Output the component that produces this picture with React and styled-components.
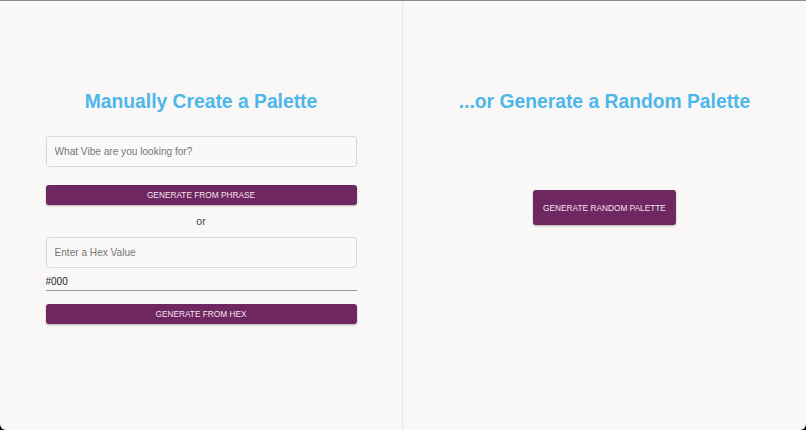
import React from 'react';
import styled, { createGlobalStyle } from 'styled-components';

const Global = createGlobalStyle`
  html, body {
    margin: 0;
    padding: 0;
    background: #000;
  }
  * { box-sizing: border-box; }
`;

const Page = styled.div`
  display: flex;
  height: 430px;
  width: 806px;
  background: #f9f8f7;
  border-top: 1px solid #8f8b8e;
  border-radius: 0 0 6px 6px;
  overflow: hidden;
  font-family: 'Liberation Sans', Arial, sans-serif;
`;

const Panel = styled.section`
  flex: ${p => (p.$left ? '0 0 403px' : '1')};
  display: flex;
  flex-direction: column;
  align-items: center;
  padding-top: 89px;
  border-right: ${p => (p.$left ? '1px solid #e9e7e6' : 'none')};
`;

const Title = styled.h2`
  margin: 0;
  font-size: 19.3px;
  line-height: 24px;
  font-weight: bold;
  color: #4db6ea;
`;

const Form = styled.div`
  width: 311px;
  display: flex;
  flex-direction: column;
  margin-top: 22px;
`;

const TextInput = styled.input`
  height: 31px;
  width: 100%;
  border: 1px solid #dad8d7;
  border-radius: 3px;
  background: #faf9f8;
  padding: 0 8px;
  font-family: inherit;
  font-size: 10.1px;
  color: #333;
  outline: none;
  &::placeholder { color: #777; }
`;

const Button = styled.button`
  width: ${p => p.$w || '100%'};
  height: ${p => p.$h || '20px'};
  margin-top: ${p => p.$mt || '0'};
  border: none;
  border-radius: 3px;
  background: #6f2762;
  color: #f4e4ee;
  font-family: inherit;
  font-size: ${p => p.$fs || '8.3px'};
  white-space: nowrap;
  text-transform: uppercase;
  box-shadow: 0 1px 2px rgba(0, 0, 0, 0.3);
  cursor: pointer;
`;

const Or = styled.div`
  height: 32px;
  display: flex;
  align-items: center;
  justify-content: center;
  font-size: 10.5px;
  color: #444;
`;

const HexField = styled.input`
  height: 23px;
  width: 100%;
  border: none;
  border-bottom: 1px solid #9a9899;
  background: transparent;
  padding: 4px 0 0;
  font-family: inherit;
  font-size: 10px;
  font-weight: 500;
  color: #222;
  outline: none;
`;

export default function App() {
  return (
    <>
      <Global />
      <Page>
        <Panel $left>
          <Title>Manually Create a Palette</Title>
          <Form>
            <TextInput placeholder="What Vibe are you looking for?" />
            <Button $mt="18px">Generate from phrase</Button>
            <Or>or</Or>
            <TextInput placeholder="Enter a Hex Value" />
            <HexField defaultValue="#000" />
            <Button $mt="13px">Generate from hex</Button>
          </Form>
        </Panel>
        <Panel>
          <Title>...or Generate a Random Palette</Title>
          <Button $w="143px" $h="35px" $mt="76px" $fs="8.3px">Generate random palette</Button>
        </Panel>
      </Page>
    </>
  );
}
